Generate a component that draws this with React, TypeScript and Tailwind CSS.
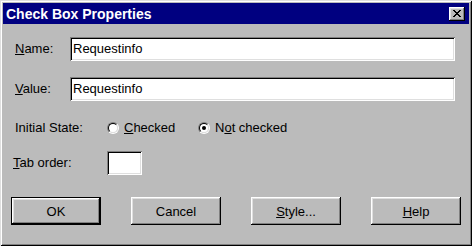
import React from "react";

const raised =
  "shadow-[inset_-1px_-1px_0_#000000,inset_1px_1px_0_#ffffff,inset_-2px_-2px_0_#808080,inset_2px_2px_0_#dfdfdf]";
const sunken =
  "shadow-[inset_1px_1px_0_#808080,inset_-1px_-1px_0_#ffffff,inset_2px_2px_0_#000000,inset_-2px_-2px_0_#dfdfdf]";

function CloseGlyph() {
  const rows = [
    "11000011",
    "01100110",
    "00111100",
    "00011000",
    "00111100",
    "01100110",
    "11000011",
  ];
  const rects: React.ReactElement[] = [];
  rows.forEach((r, y) =>
    r.split("").forEach((c, x) => {
      if (c === "1") rects.push(<rect key={`${x}-${y}`} x={x} y={y} width={1} height={1} fill="#000" />);
    })
  );
  return (
    <svg width="8" height="7" viewBox="0 0 8 7" shapeRendering="crispEdges">
      {rects}
    </svg>
  );
}

function Radio({ checked }: { checked?: boolean }) {
  return (
    <span className="w-[12px] h-[12px] rounded-full border border-t-[#808080] border-l-[#808080] border-b-[#ffffff] border-r-[#ffffff] flex">
      <span className="flex-1 rounded-full border border-t-[#000000] border-l-[#000000] border-b-[#dfdfdf] border-r-[#dfdfdf] bg-white flex items-center justify-center">
        {checked && <span className="w-[4px] h-[4px] rounded-full bg-black" />}
      </span>
    </span>
  );
}

function Btn({ children, def }: { children: React.ReactNode; def?: boolean }) {
  return (
    <div className={`w-[90px] h-[28px] shrink-0 flex ${def ? "border border-black" : ""}`}>
      <div className={`flex-1 flex items-center justify-center bg-[#bbbbbb] ${raised}`}>
        <span className="text-[13px] text-black leading-none">{children}</span>
      </div>
    </div>
  );
}

export default function App() {
  return (
    <div className="w-[472px] h-[246px] bg-[#bbbbbb] p-[3px] flex flex-col font-['Liberation_Sans',Arial,sans-serif] text-black shadow-[inset_1px_1px_0_#dfdfdf,inset_-1px_-1px_0_#000000,inset_2px_2px_0_#ffffff,inset_-2px_-2px_0_#808080]">
      <div className="h-[21px] bg-[#000080] flex items-center justify-between pl-[3px] pr-[4px]">
        <span className="text-white font-bold text-[14px] leading-none">Check Box Properties</span>
        <div className={`w-[16px] h-[14px] bg-[#bbbbbb] flex items-center justify-center ${raised}`}>
          <CloseGlyph />
        </div>
      </div>

      <div className="flex flex-col pt-[13px] text-[13px]">
        <div className="h-[24px] flex items-center pr-[14px]">
          <span className="w-[67px] pl-[12px]"><u>N</u>ame:</span>
          <div className={`flex-1 h-[24px] bg-white flex items-center pl-[3px] ${sunken}`}>Requestinfo</div>
        </div>
        <div className="h-[24px] mt-[16px] flex items-center pr-[14px]">
          <span className="w-[67px] pl-[12px]"><u>V</u>alue:</span>
          <div className={`flex-1 h-[24px] bg-white flex items-center pl-[3px] ${sunken}`}>Requestinfo</div>
        </div>
        <div className="h-[24px] mt-[15px] flex items-center">
          <span className="w-[104px] pl-[12px]">Initial State:</span>
          <div className="w-[91px] flex items-center gap-[5px]">
            <Radio />
            <span><u>C</u>hecked</span>
          </div>
          <div className="flex items-center gap-[5px]">
            <Radio checked />
            <span>N<u>o</u>t checked</span>
          </div>
        </div>
        <div className="h-[24px] mt-[11px] flex items-center">
          <span className="w-[104px] pl-[10px]"><u>T</u>ab order:</span>
          <div className={`w-[35px] h-[24px] bg-white ${sunken}`} />
        </div>
        <div className="mt-[22px] pl-[8px] flex gap-[30px]">
          <Btn def>OK</Btn>
          <Btn>Cancel</Btn>
          <Btn><u>S</u>tyle...</Btn>
          <Btn><u>H</u>elp</Btn>
        </div>
      </div>
    </div>
  );
}
